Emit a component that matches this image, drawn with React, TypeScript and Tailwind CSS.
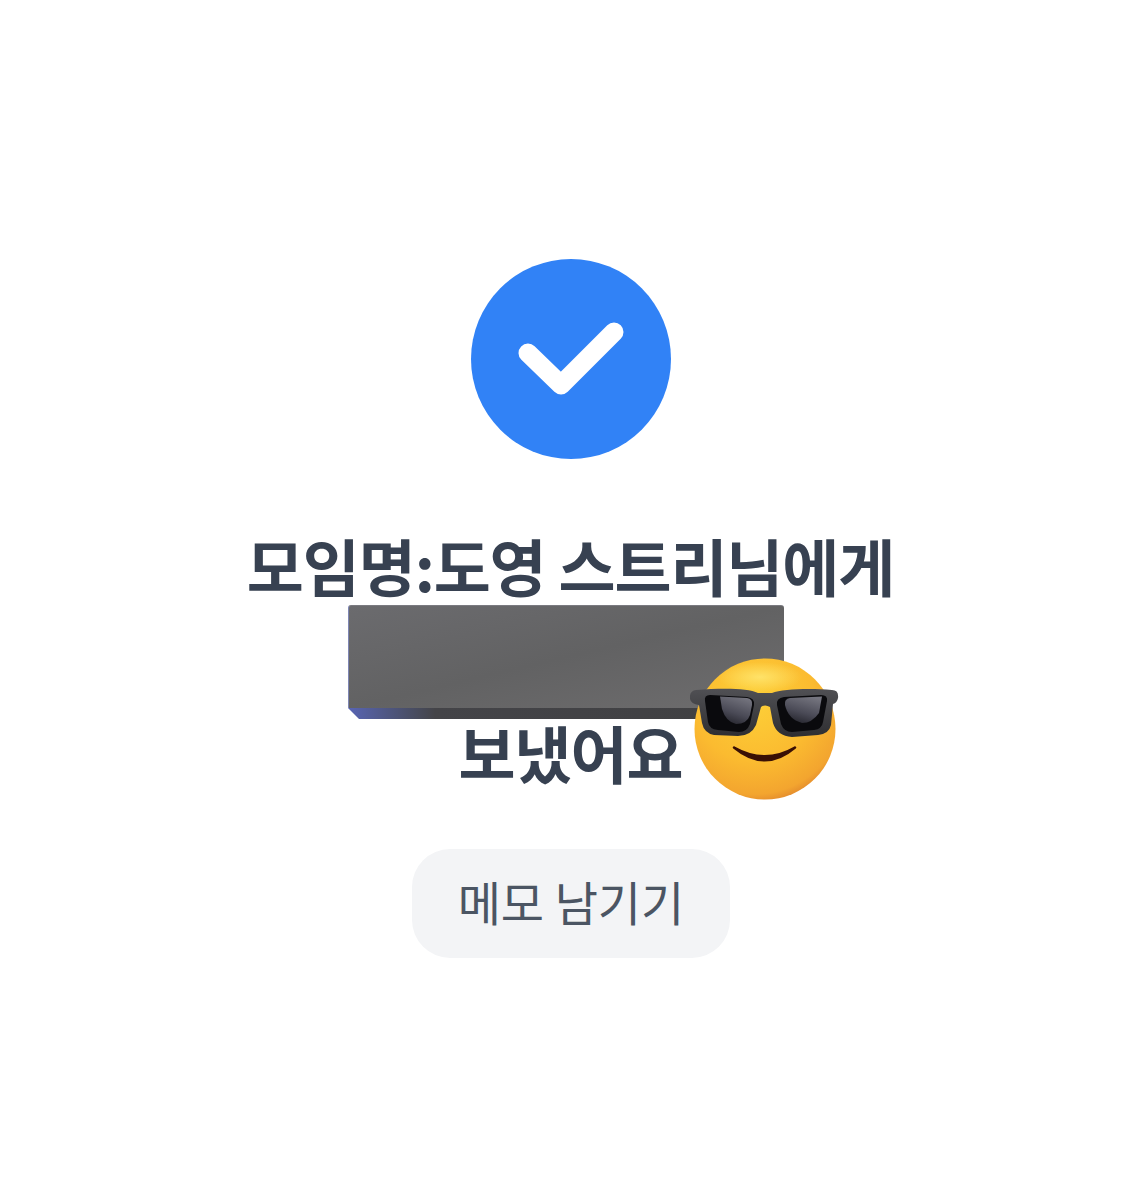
export default function App() {
  const ff = { fontFamily: '"Noto Sans CJK KR", sans-serif' };
  return (
    <div className="min-h-[1200px] w-full bg-white flex flex-col items-center pt-[259px]" style={ff}>
      <div className="w-[200px] h-[200px] rounded-full bg-[#3182f6] flex items-center justify-center">
        <svg width="200" height="200" viewBox="0 0 200 200" fill="none">
          <path d="M57 94L90 126L143 73" stroke="white" strokeWidth="19" strokeLinecap="round" strokeLinejoin="round" />
        </svg>
      </div>
      <h1 className="mt-[60px] w-full flex flex-col items-center text-[62px] leading-[92px] font-bold tracking-[-1.100px] text-[#374151]">
        <span className="whitespace-nowrap">모임명:도영 스트리님에게</span>
        <span className="relative h-[95px] w-full">
          <span className="absolute left-[348px] top-[-6px] w-[436px] h-[114px] flex flex-col">
            <span className="block h-[103px] rounded-t-[3px] border-l border-t border-l-[#7e86b4] border-t-[#7a7a80] bg-gradient-to-br from-[#6b6b6e] via-[#626263] to-[#6e6d6e]" />
            <span className="block h-[11px] rounded-b-[4px] bg-gradient-to-r from-[#5864b4] via-[#444448] via-20% to-[#3f3f41] [clip-path:polygon(0_0,100%_0,100%_100%,11px_100%)]" />
          </span>
        </span>
        <span className="relative whitespace-nowrap">
          보냈어요
          <svg className="absolute left-[231px] top-[-49px]" width="150" height="144" viewBox="0 0 150 144">
            <defs>
              <radialGradient id="face" cx="0.42" cy="0.3" r="0.78">
                <stop offset="0" stopColor="#fdd038" />
                <stop offset="0.55" stopColor="#fbbb30" />
                <stop offset="0.85" stopColor="#f3a52f" />
                <stop offset="1" stopColor="#d6742a" />
              </radialGradient>
              <radialGradient id="shine" cx="0.5" cy="0.5" r="0.5">
                <stop offset="0" stopColor="#ffe56e" stopOpacity="0.9" />
                <stop offset="1" stopColor="#ffe56e" stopOpacity="0" />
              </radialGradient>
              <linearGradient id="lens" x1="0.7" y1="0" x2="0.3" y2="1">
                <stop offset="0" stopColor="#75757f" />
                <stop offset="0.6" stopColor="#4a4a56" />
                <stop offset="1" stopColor="#26262e" />
              </linearGradient>
              <linearGradient id="frame" x1="0" y1="0" x2="0" y2="1">
                <stop offset="0" stopColor="#505054" />
                <stop offset="1" stopColor="#2e2e31" />
              </linearGradient>
            </defs>
            <circle cx="75" cy="72" r="70.500" fill="url(#face)" />
            <ellipse cx="70" cy="20" rx="42" ry="15" fill="url(#shine)" />
            <path d="M0 42Q-1 34 6 33C32 31 58 31 68 36H82C92 32 120 31 142 33Q149 33 148 41Q147 46 143 47L141 68Q139 77 128 78L102 80Q87 79 83 66L80 50Q75 47 71 50L66 68Q61 79 48 79L24 78Q14 76 12 66L9 48Q1 47 0 42Z" fill="url(#frame)" />
            <path d="M15 44Q14 38 20 38L57 40Q65 41 64 48L60 67Q57 75 49 75L28 73Q19 72 18 65Z" fill="#0a0a0d" />
            <path d="M137 44Q138 38 131 38L94 40Q86 41 87 48L91 67Q94 75 102 75L124 73Q132 72 133 65Z" fill="#0a0a0d" />
            <path d="M30 39.500L57 41Q63 42 62 48L60 58Q57 67 46 67Q36 65 32 52Z" fill="url(#lens)" />
            <path d="M132 39.500L100 41Q94 42 95 48Q98 62 112 66Q122 66 129 56Z" fill="url(#lens)" />
            <path d="M44 90.500Q75 116 105 90.500Q75 108 44 90.500Z" fill="#3a1005" stroke="#3a1005" strokeWidth="2.500" strokeLinejoin="round" />
          </svg>
        </span>
      </h1>
      <button className="mt-[51px] ml-[1px] w-[318px] h-[109px] pb-[5px] rounded-[38px] bg-[#f3f4f6] text-[47px] font-normal text-[#4b5563]">
        메모 남기기
      </button>
    </div>
  );
}
